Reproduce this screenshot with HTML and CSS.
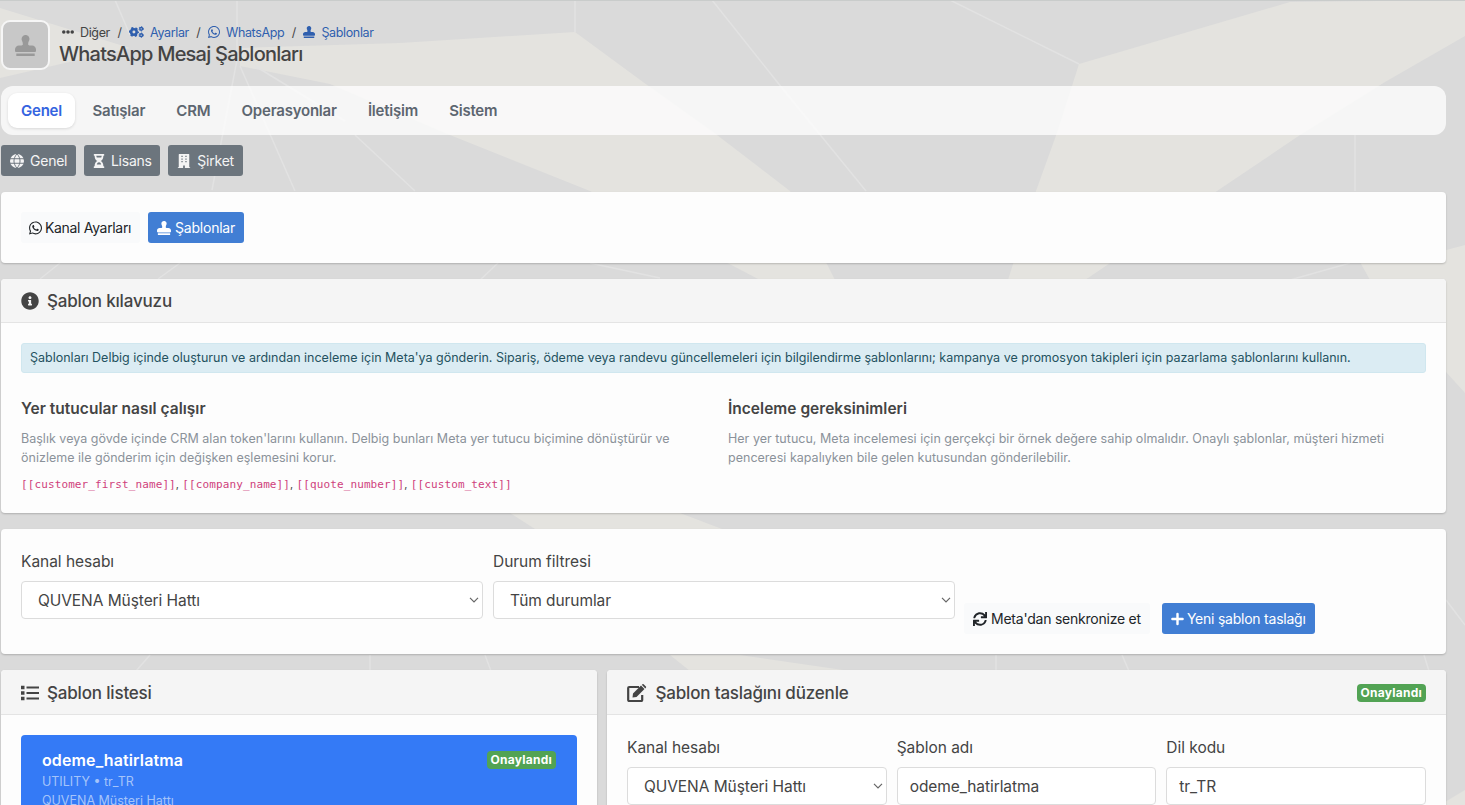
FILE: index.html
```html
<!DOCTYPE html>
<html lang="tr">
<head>
  <meta charset="UTF-8">
  <meta name="viewport" content="width=device-width, initial-scale=1.0">
  <title>WhatsApp Mesaj Şablonları</title>
  <link rel="stylesheet" href="styles.css">
</head>
<body>
  <!-- icon sprite -->
  <svg class="sprite" width="0" height="0">
    <symbol id="i-stamp" viewBox="0 0 512 512"><path d="M32 512h448v-64H32v64zm384-256h-66.56c-16.26 0-29.44-13.18-29.44-29.44v-9.46c0-27.37 8.88-53.41 21.46-77.72 9.11-17.61 12.9-38.39 9.05-60.42-6.77-38.78-38.47-70.7-77.26-77.45C212.62-9.04 160 37.33 160 96c0 14.16 3.12 27.54 8.69 39.58C182.02 164.43 192 194.7 192 226.49v.07c0 16.26-13.18 29.44-29.44 29.44H96c-53.02 0-96 42.98-96 96v32c0 17.67 14.33 32 32 32h448c17.67 0 32-14.33 32-32v-32c0-53.02-42.98-96-96-96z"/></symbol>
    <symbol id="i-dots" viewBox="0 0 512 512"><circle cx="76" cy="256" r="76"/><circle cx="256" cy="256" r="76"/><circle cx="436" cy="256" r="76"/></symbol>
    <symbol id="i-cogs" viewBox="0 0 640 512">
      <circle cx="210" cy="256" r="118" fill="none" stroke="currentColor" stroke-width="110"/>
      <circle cx="210" cy="256" r="180" fill="none" stroke="currentColor" stroke-width="70" stroke-dasharray="94.2 94.2" stroke-dashoffset="47"/>
      <circle cx="520" cy="120" r="60" fill="none" stroke="currentColor" stroke-width="62"/>
      <circle cx="520" cy="120" r="96" fill="none" stroke="currentColor" stroke-width="36" stroke-dasharray="50 50.5"/>
      <circle cx="520" cy="392" r="60" fill="none" stroke="currentColor" stroke-width="62"/>
      <circle cx="520" cy="392" r="96" fill="none" stroke="currentColor" stroke-width="36" stroke-dasharray="50 50.5"/>
    </symbol>
    <symbol id="i-whatsapp" viewBox="0 32 448 448"><path d="M380.9 97.1C339 55.1 283.2 32 223.9 32c-122.4 0-222 99.6-222 222 0 39.1 10.2 77.3 29.6 111L0 480l117.7-30.9c32.4 17.7 68.9 27 106.1 27h.1c122.3 0 224.1-99.6 224.1-222 0-59.3-25.2-115-67.1-157zm-157 341.6c-33.2 0-65.7-8.9-94-25.7l-6.7-4-69.8 18.3L72 359.2l-4.4-7c-18.5-29.4-28.2-63.3-28.2-98.2 0-101.7 82.8-184.5 184.6-184.5 49.3 0 95.6 19.2 130.4 54.1 34.8 34.9 56.2 81.2 56.1 130.5 0 101.8-84.9 184.6-186.6 184.6zm101.2-138.2c-5.5-2.8-32.8-16.2-37.9-18-5.1-1.9-8.8-2.8-12.5 2.8-3.7 5.6-14.3 18-17.6 21.8-3.2 3.7-6.5 4.2-12 1.4-32.6-16.3-54-29.1-75.5-66-5.7-9.8 5.7-9.1 16.3-30.3 1.8-3.7.9-6.9-.5-9.7-1.4-2.8-12.5-30.1-17.1-41.2-4.5-10.8-9.1-9.3-12.5-9.5-3.2-.2-6.9-.2-10.6-.2-3.7 0-9.7 1.4-14.8 6.9-5.1 5.6-19.4 19-19.4 46.3 0 27.3 19.9 53.7 22.6 57.4 2.8 3.7 39.1 59.7 94.8 83.8 35.2 15.2 49 16.5 66.6 13.9 10.7-1.6 32.8-13.4 37.4-26.4 4.6-13 4.6-24.1 3.2-26.4-1.3-2.5-5-3.9-10.5-6.6z"/></symbol>
    <symbol id="i-globe" viewBox="0 0 16 16"><circle cx="8" cy="8" r="8"/><path d="M0 5.4h16M0 10.6h16M8 0c-4.6 4.5-4.6 11.5 0 16M8 0c4.6 4.5 4.6 11.5 0 16" fill="none" stroke="#6c757d" stroke-width="1.1"/></symbol>
    <symbol id="i-hourglass" viewBox="0 0 12 16"><path fill-rule="evenodd" d="M.7 0h10.6q.7 0 .7.7v.8q0 .5-.7.5H11c0 3-1 5-3.1 6C10 9 11 11 11 14h.3q.7 0 .7.6v.8q0 .6-.7.6H.7q-.7 0-.7-.6v-.8Q0 14 .7 14H1c0-3 1-5 3.1-6C2 7 1 5 1 2H.7Q0 2 0 1.500V.7Q0 0 .7 0zM3 2q0 1 .5 2h5Q9 3 9 2zm.5 10h5C8 10.3 7.2 9.4 6 9.4S4 10.3 3.5 12z"/></symbol>
    <symbol id="i-building" viewBox="0 0 14 16"><path fill-rule="evenodd" d="M1.5 0h11q.5 0 .5.6V15h1v1H8v-3H6v3H0v-1h1V.6Q1 0 1.5 0zM4 2v1.5h1.5V2zm4.500 0v1.5H10V2zM4 5v1.5h1.5V5zm4.500 0v1.5H10V5zM4 8v1.5h1.5V8zm4.500 0v1.5H10V8z"/></symbol>
    <symbol id="i-info" viewBox="0 0 512 512"><path d="M256 8C119.043 8 8 119.083 8 256c0 136.997 111.043 248 248 248s248-111.003 248-248C504 119.083 392.957 8 256 8zm0 110c23.196 0 42 18.804 42 42s-18.804 42-42 42-42-18.804-42-42 18.804-42 42-42zm56 254c0 6.627-5.373 12-12 12h-88c-6.627 0-12-5.373-12-12v-24c0-6.627 5.373-12 12-12h12v-64h-12c-6.627 0-12-5.373-12-12v-24c0-6.627 5.373-12 12-12h64c6.627 0 12 5.373 12 12v100h12c6.627 0 12 5.373 12 12v24z"/></symbol>
    <symbol id="i-sync" viewBox="0 0 512 512"><path d="M440.65 12.57l4 82.77A247.16 247.16 0 0 0 255.83 8C134.73 8 33.91 94.92 12.29 209.82A12 12 0 0 0 24.09 224h49.05a12 12 0 0 0 11.67-9.26 175.91 175.91 0 0 1 317-56.94l-101.46-4.86a12 12 0 0 0-12.57 12v47.41a12 12 0 0 0 12 12H500a12 12 0 0 0 12-12V12a12 12 0 0 0-12-12h-47.37a12 12 0 0 0-11.98 12.57zM255.83 432a175.61 175.61 0 0 1-146-77.8l101.8 4.87a12 12 0 0 0 12.57-12v-47.4a12 12 0 0 0-12-12H12a12 12 0 0 0-12 12V500a12 12 0 0 0 12 12h47.35a12 12 0 0 0 12-12.6l-4.15-82.57A247.17 247.17 0 0 0 255.83 504c121.11 0 221.93-86.92 243.55-201.82a12 12 0 0 0-11.8-14.18h-49.05a12 12 0 0 0-11.67 9.26A175.86 175.86 0 0 1 255.83 432z"/></symbol>
    <symbol id="i-plus" viewBox="0 0 14 14"><path d="M7 1.5v11M1.5 7h11" stroke="currentColor" stroke-width="2.6" stroke-linecap="round"/></symbol>
    <symbol id="i-list" viewBox="0 0 18 16"><path d="M0 .8h3.5v3.5H0zM0 6.3h3.5v3.5H0zM0 11.8h3.5v3.5H0zM5.5 1.5H18v2H5.5zM5.5 7H18v2H5.5zM5.5 12.5H18v2H5.5z"/></symbol>
    <symbol id="i-edit" viewBox="0 0 20 18"><path d="M12 3H2.2Q1.2 3 1.2 4v12q0 1 1 1h12q1 0 1-1v-5" fill="none" stroke="currentColor" stroke-width="2.2"/><path d="M5.5 13.5l.5-4 8-8 3.5 3.5-8 8zM14.8.8l.7-.5q.7-.5 1.4.1l2 2q.6.7 0 1.4l-.6.7z"/></symbol>
    <symbol id="i-chevron" viewBox="0 0 10 6"><path d="M1 .8l4 4 4-4" fill="none" stroke="#666" stroke-width="1.2"/></symbol>
  </svg>

  <!-- page backdrop -->
  <svg class="backdrop" viewBox="0 0 1465 805">
    <g fill="#e4e3df">
      <path d="M0 8L130 48 0 78z"/>
      <path d="M240 48L400 43 575 32 643 82 717 135 790 191 835 280H760L590 191 450 135 330 84 240 66z"/>
      <path d="M1079 64L1290 2 1465 0V36L1385 82 1300 135 1217 191 1085 280H1008L1036 191 1058 130z"/>
      <path d="M1465 245L1446 250 1360 262 1370 280H1446V372L1465 393z"/>
      <path d="M510 513H680L722 529H535z"/>
      <path d="M670 655H740L850 671H690z"/>
      <path d="M1465 790L1440 805H1465z"/>
    </g>
    <g fill="none" stroke="#e2e2e2" stroke-width="1.5">
      <path d="M237 0v60l-25 130M575 0v32M712 0l66 83 88 108M950 0l129 64M240 66l55 125M255 66l90 55M355 135l60 56M1355 135v56M130 35L115 0"/>
      <path d="M60 263l-20 16M180 263l-22 16M498 263l-18 17M590 263l70 15M1350 263l-60 17M150 655l-14 16M370 655v16M485 655l6 16M996 655v16M1122 655l7 16M1424 655l5 16M1446 600l19 25"/>
    </g>
  </svg>

  <div class="page">
    <header class="page-header">
      <div class="page-icon"><svg class="icon"><use href="#i-stamp"/></svg></div>
      <div>
        <nav class="breadcrumb">
          <span class="crumb"><svg class="icon"><use href="#i-dots"/></svg>Diğer</span><i>/</i>
          <a class="crumb cogs"><svg class="icon"><use href="#i-cogs"/></svg>Ayarlar</a><i>/</i>
          <a class="crumb"><svg class="icon"><use href="#i-whatsapp"/></svg>WhatsApp</a><i>/</i>
          <a class="crumb"><svg class="icon"><use href="#i-stamp"/></svg>Şablonlar</a>
        </nav>
        <h1>WhatsApp Mesaj Şablonları</h1>
      </div>
    </header>

    <nav class="tabs">
      <a class="tab active">Genel</a>
      <a class="tab">Satışlar</a>
      <a class="tab">CRM</a>
      <a class="tab">Operasyonlar</a>
      <a class="tab">İletişim</a>
      <a class="tab">Sistem</a>
    </nav>

    <div class="subnav">
      <a class="btn btn-secondary"><svg class="icon"><use href="#i-globe"/></svg>Genel</a>
      <a class="btn btn-secondary hourglass"><svg class="icon"><use href="#i-hourglass"/></svg>Lisans</a>
      <a class="btn btn-secondary"><svg class="icon"><use href="#i-building"/></svg>Şirket</a>
    </div>

    <section class="card channel-nav">
      <a class="btn btn-light"><svg class="icon"><use href="#i-whatsapp"/></svg>Kanal Ayarları</a>
      <a class="btn btn-primary"><svg class="icon"><use href="#i-stamp"/></svg>Şablonlar</a>
    </section>

    <section class="card guide">
      <div class="card-header"><svg class="icon"><use href="#i-info"/></svg><h2>Şablon kılavuzu</h2></div>
      <div class="card-body">
        <div class="alert">Şablonları Delbig içinde oluşturun ve ardından inceleme için Meta'ya gönderin. Sipariş, ödeme veya randevu güncellemeleri için bilgilendirme şablonlarını; kampanya ve promosyon takipleri için pazarlama şablonlarını kullanın.</div>
        <div class="guide-cols">
          <div>
            <h3>Yer tutucular nasıl çalışır</h3>
            <p>Başlık veya gövde içinde CRM alan token'larını kullanın. Delbig bunları Meta yer tutucu biçimine dönüştürür ve<br>önizleme ile gönderim için değişken eşlemesini korur.</p>
            <div class="tokens"><code>[[customer_first_name]]</code>, <code>[[company_name]]</code>, <code>[[quote_number]]</code>, <code>[[custom_text]]</code></div>
          </div>
          <div>
            <h3>İnceleme gereksinimleri</h3>
            <p>Her yer tutucu, Meta incelemesi için gerçekçi bir örnek değere sahip olmalıdır. Onaylı şablonlar, müşteri hizmeti<br>penceresi kapalıyken bile gelen kutusundan gönderilebilir.</p>
          </div>
        </div>
      </div>
    </section>

    <section class="card filters">
      <div class="field">
        <label>Kanal hesabı</label>
        <div class="control select"><span>QUVENA Müşteri Hattı</span><svg class="chevron"><use href="#i-chevron"/></svg></div>
      </div>
      <div class="field">
        <label>Durum filtresi</label>
        <div class="control select"><span>Tüm durumlar</span><svg class="chevron"><use href="#i-chevron"/></svg></div>
      </div>
      <div class="filter-actions">
        <a class="btn btn-light"><svg class="icon"><use href="#i-sync"/></svg>Meta'dan senkronize et</a>
        <a class="btn btn-primary"><svg class="icon"><use href="#i-plus"/></svg>Yeni şablon taslağı</a>
      </div>
    </section>

    <div class="columns">
      <section class="card">
        <div class="card-header"><svg class="icon"><use href="#i-list"/></svg><h2>Şablon listesi</h2></div>
        <div class="card-body">
          <div class="template active">
            <div class="template-top"><strong>odeme_hatirlatma</strong><span class="badge">Onaylandı</span></div>
            <small>UTILITY • tr_TR</small>
            <small>QUVENA Müşteri Hattı</small>
          </div>
        </div>
      </section>

      <section class="card">
        <div class="card-header edit"><svg class="icon"><use href="#i-edit"/></svg><h2>Şablon taslağını düzenle</h2><span class="badge">Onaylandı</span></div>
        <div class="card-body form-row">
          <div class="field">
            <label>Kanal hesabı</label>
            <div class="control select"><span>QUVENA Müşteri Hattı</span><svg class="chevron"><use href="#i-chevron"/></svg></div>
          </div>
          <div class="field">
            <label>Şablon adı</label>
            <div class="control">odeme_hatirlatma</div>
          </div>
          <div class="field">
            <label>Dil kodu</label>
            <div class="control">tr_TR</div>
          </div>
        </div>
      </section>
    </div>
  </div>
</body>
</html>
```
FILE: styles.css
```css
* {
  box-sizing: border-box;
}

body {
  margin: 0;
  background: #dadada;
  color: #444;
  font-family: Inter, "Liberation Sans", sans-serif;
  font-size: 15.5px;
}

h1, h2, h3, p {
  margin: 0;
  font-weight: 500;
}

.sprite {
  display: block;
}

.backdrop {
  position: absolute;
  top: 0;
  left: 0;
  z-index: -1;
  width: 1465px;
  height: 805px;
}

.icon {
  flex: none;
  width: 14px;
  height: 14px;
  fill: currentColor;
}

.page {
  width: 1465px;
  height: 805px;
  padding: 0 19px 0 1px;
  border-top: 1px solid #c9cccb;
  overflow: hidden;
}

/* header */
.page-header {
  display: flex;
  gap: 8px;
  height: 85px;
  padding-top: 19px;
}

.page-icon {
  display: flex;
  align-items: center;
  justify-content: center;
  width: 49px;
  height: 50px;
  border: 2px solid #f6f6f6;
  border-radius: 9px;
  background: #c8c8c8;
  color: #999;
}

.page-icon .icon {
  width: 21px;
  height: 21px;
}

.breadcrumb {
  display: flex;
  align-items: center;
  height: 16px;
  margin: 4px 0 0 4px;
  font-size: 12.5px;
  letter-spacing: -0.35px;
}

.breadcrumb i {
  width: 19px;
  text-align: center;
  font-style: normal;
}

.breadcrumb a {
  color: #2f5fae;
}

.crumb {
  display: flex;
  align-items: center;
  gap: 6px;
}

.breadcrumb .icon {
  width: 12px;
  height: 12px;
}

.breadcrumb .cogs .icon {
  width: 15px;
}

h1 {
  margin: 2px 0 0 1px;
  font-size: 20px;
  line-height: 25px;
  letter-spacing: -0.77px;
}

/* tabs */
.tabs {
  display: flex;
  align-items: center;
  height: 49px;
  padding: 0 7px;
  border-radius: 12px;
  background: rgba(255, 255, 255, 0.76);
}

.tab {
  padding: 0 15.6px;
  color: #5d6670;
  font-size: 15px;
  font-weight: 600;
  line-height: 35px;
  letter-spacing: -0.22px;
}

.tab.active {
  margin-right: 2px;
  padding: 0 13px;
  border-radius: 9px;
  background: #fff;
  box-shadow: 0 1px 3px rgba(0, 0, 0, 0.12);
  color: #3464e0;
}

/* buttons */
.btn {
  display: flex;
  align-items: center;
  gap: 4px;
  height: 31px;
  padding: 0 9px;
  border-radius: 3px;
  font-size: 14px;
  letter-spacing: -0.23px;
  white-space: nowrap;
}

.btn-secondary {
  gap: 6px;
  background: #6c757d;
  color: #f4f4f4;
}

.btn-light {
  background: #f9fafb;
  color: #212529;
}

.btn-primary {
  background: #417ed4;
  color: #fff;
}

.hourglass .icon {
  width: 12px;
}

.subnav {
  display: flex;
  gap: 8px;
  margin: 10px 0 16px;
}

.subnav .btn {
  padding-right: 8.6px;
}

/* cards */
.card {
  border-radius: 4px;
  background: #fdfdfd;
  box-shadow: 0 1px 2px rgba(0, 0, 0, 0.2);
}

.card-header {
  display: flex;
  align-items: center;
  gap: 8.5px;
  height: 45px;
  padding: 1px 20px 0 19.5px;
  border-bottom: 1px solid #e4e4e4;
  border-radius: 4px 4px 0 0;
  background: #f5f5f5;
}

.card-header .icon {
  width: 18px;
  height: 18px;
}

.card-header.edit {
  padding-left: 20px;
}

.card-header.edit .icon {
  width: 20px;
}

.card-header h2 {
  font-size: 17px;
  letter-spacing: -0.18px;
}

.card-body {
  padding: 20px;
}

.channel-nav {
  display: flex;
  gap: 8px;
  height: 71px;
  padding: 20px;
}

.channel-nav .btn {
  gap: 3px;
  letter-spacing: -0.33px;
}

.channel-nav .btn-light {
  padding-left: 8px;
}

.channel-nav .btn-light .icon {
  width: 13px;
}

.channel-nav .btn-primary {
  gap: 4px;
  letter-spacing: -0.23px;
}

.guide {
  height: 234px;
  margin: 16px 0;
}

.guide .card-header {
  height: 44px;
}

.alert {
  height: 30px;
  padding: 0 8px;
  border: 1px solid #d0e7ef;
  border-radius: 3px;
  background: #dbecf3;
  color: #245260;
  font-size: 12.5px;
  line-height: 28px;
  white-space: nowrap;
}

.guide-cols {
  display: grid;
  grid-template-columns: 1fr 1fr;
  gap: 9px;
  margin-top: 26px;
}

h3 {
  font-size: 15.5px;
  font-weight: 600;
  line-height: 20px;
  letter-spacing: 0.02px;
}

.guide-cols p {
  margin-top: 10px;
  color: #8b929a;
  font-size: 12.5px;
  font-weight: 400;
  line-height: 19px;
  letter-spacing: 0.02px;
  white-space: nowrap;
}

.tokens {
  margin-top: 9px;
  font-size: 11px;
  line-height: 17px;
  letter-spacing: 0.11px;
}

.tokens code {
  color: #cf3f7c;
  font-family: "DejaVu Sans Mono", monospace;
  font-size: 11px;
}

/* forms */
.filters {
  display: flex;
  gap: 10px;
  height: 125px;
  padding: 22px 20px;
}

.filters .field {
  width: 462px;
}

.field label {
  display: block;
  margin-bottom: 9px;
  line-height: 21px;
  letter-spacing: -0.03px;
}

.control {
  display: flex;
  align-items: center;
  height: 38px;
  padding: 0 12px;
  border: 1px solid #dcdcdc;
  border-radius: 4px;
  background: #fff;
  letter-spacing: -0.07px;
}

.select {
  justify-content: space-between;
  padding: 0 3px 0 16px;
}

.chevron {
  width: 10px;
  height: 6px;
}

.filter-actions {
  display: flex;
  gap: 12px;
  margin: 52px 0 0 -1px;
}

.filter-actions .btn-primary {
  gap: 3px;
}

.filter-actions .btn-primary .icon {
  width: 13px;
}

.columns {
  display: grid;
  grid-template-columns: 596px 839px;
  gap: 10px;
  margin-top: 16px;
}

.template {
  height: 90px;
  padding: 14px 21px;
  border-radius: 4px 4px 0 0;
  background: #347af6;
  color: #fff;
}

.template-top {
  display: flex;
  align-items: center;
  justify-content: space-between;
  height: 22px;
}

.template strong {
  font-size: 16px;
  font-weight: 600;
  letter-spacing: 0.12px;
}

.template small {
  display: block;
  position: relative;
  top: 1px;
  color: #a5c4fa;
  font-size: 12.5px;
  line-height: 19px;
}

.badge {
  padding: 0 4px;
  border-radius: 4px;
  background: #52a354;
  color: #fff;
  font-size: 12px;
  font-weight: 700;
  line-height: 18px;
  letter-spacing: 0.25px;
}

.card-header .badge {
  margin-left: auto;
}

.form-row {
  display: grid;
  grid-template-columns: repeat(3, 1fr);
  gap: 10px;
  padding: 22px 20px 0;
}
```
